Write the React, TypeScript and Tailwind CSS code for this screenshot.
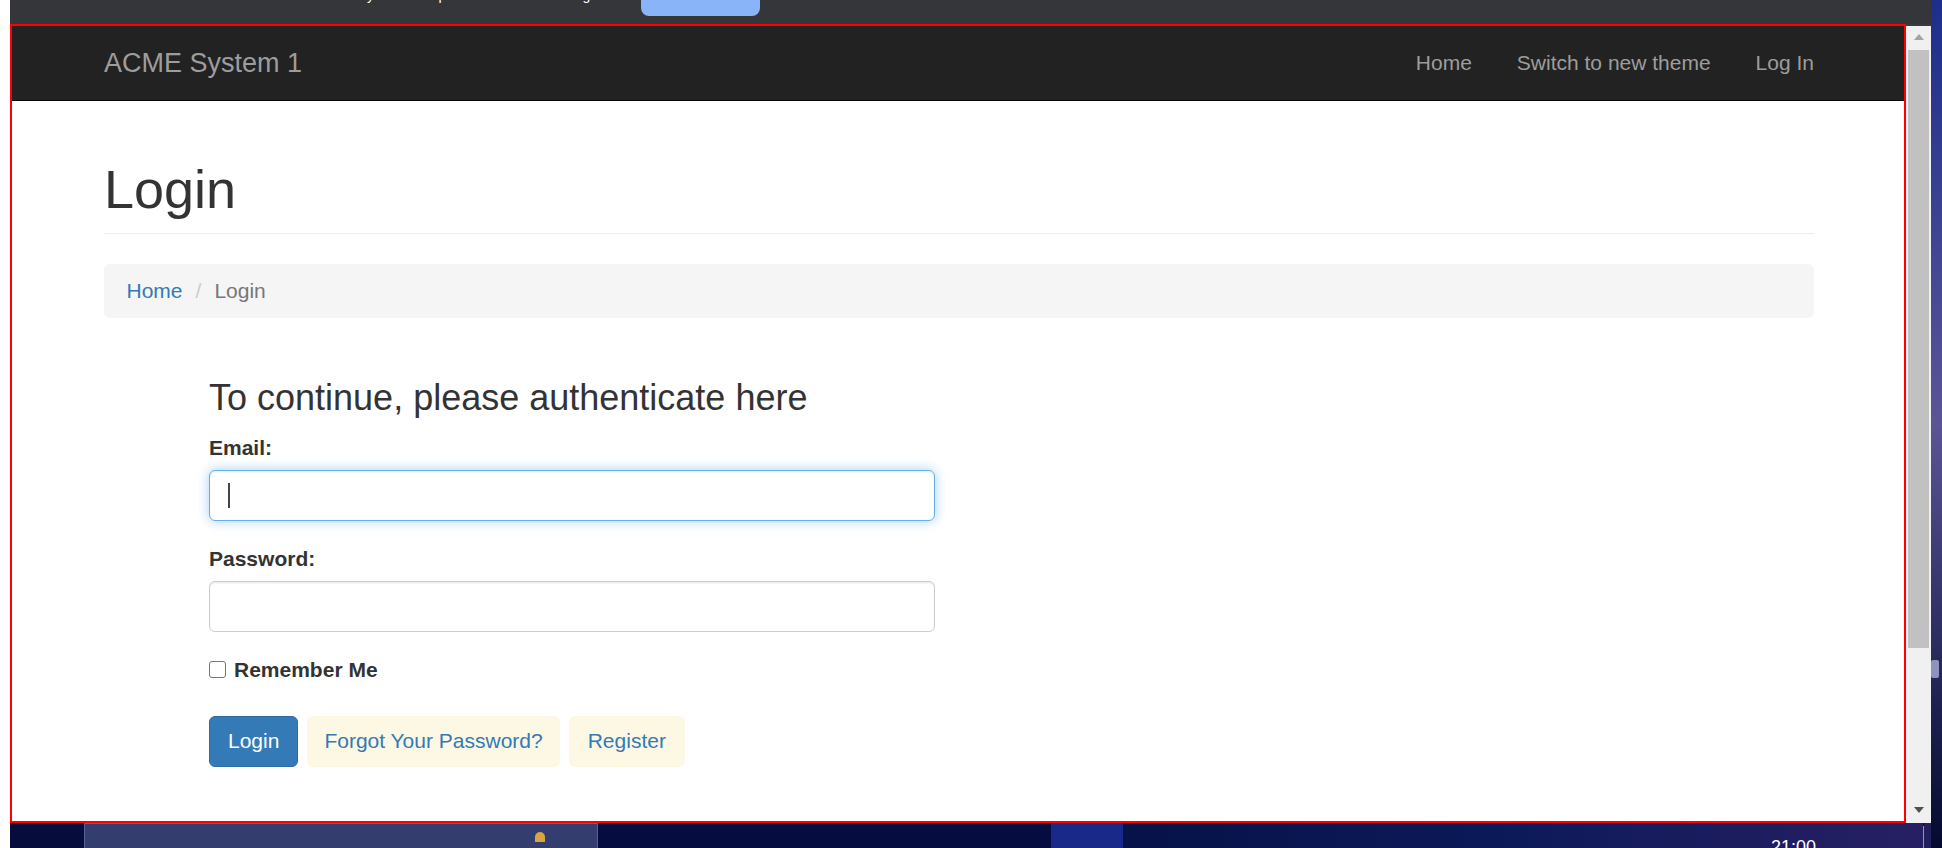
const font = "font-['Liberation_Sans',Arial,Helvetica,sans-serif]";

function TopBar() {
  return (
    <div className="flex h-[24px] shrink-0 items-start overflow-hidden bg-[#35363a]">
      <div className="flex w-[631px] shrink-0 overflow-hidden text-[14px] leading-[16px] text-white">
        <div className="flex w-[357px] shrink-0 justify-end">
          <span className="-mt-[13px] whitespace-nowrap">Screen is shared and&nbsp;</span>
        </div>
        <span className="-mt-[13px] whitespace-nowrap">you can stop the current tab sharing.</span>
      </div>
      <div className="h-[16px] w-[119px] shrink-0 rounded-b-[8px] bg-[#8ab4f8]" />
    </div>
  );
}

function Navbar() {
  return (
    <div className="h-[75px] shrink-0 border-b border-[#080808] bg-[#222222]">
      <div className="ml-[69px] flex h-full w-[1756px] items-center justify-between px-[23px]">
        <span className="text-[27px] leading-[30px] text-[#9d9d9d]">ACME System 1</span>
        <nav className="flex items-center gap-[45px] text-[21px] leading-[30px] text-[#9d9d9d]">
          <span>Home</span>
          <span>Switch to new theme</span>
          <span>Log In</span>
        </nav>
      </div>
    </div>
  );
}

function LoginForm() {
  return (
    <div className="ml-[105px] mt-[60px] w-[726px] text-[#333333]">
      <h3 className="mb-[15px] text-[36px] leading-[39.6px]">To continue, please authenticate here</h3>

      <div className="mb-[22.5px]">
        <label className="mb-[7.5px] block text-[21px] font-bold leading-[30px]">Email:</label>
        <div className="flex h-[51px] items-start rounded-[6px] border border-[#66afe9] bg-white pl-[18px] shadow-[inset_0_1.5px_1.5px_rgba(0,0,0,0.075),0_0_12px_rgba(102,175,233,0.6)]">
          <div className="mt-[12px] h-[25px] w-[2px] bg-[#444444]" />
        </div>
      </div>

      <div className="mb-[22.5px]">
        <label className="mb-[7.5px] block text-[21px] font-bold leading-[30px]">Password:</label>
        <div className="h-[51px] rounded-[6px] border border-[#cccccc] bg-white shadow-[inset_0_1.5px_1.5px_rgba(0,0,0,0.075)]" />
      </div>

      <div className="mt-[4px] flex h-[30px] items-center">
        <div className="h-[17px] w-[17px] rounded-[3px] border border-[#767676] bg-white" />
        <span className="ml-[8px] text-[21px] font-bold leading-[30px]">Remember Me</span>
      </div>

      <div className="mt-[31px] flex gap-[9px] text-[21px] leading-[30px]">
        <button className="h-[51px] rounded-[6px] border border-[#2e6da4] bg-[#337ab7] px-[18px] text-white">
          Login
        </button>
        <button className="h-[51px] rounded-[6px] border border-transparent bg-[#fcf8e3] px-[16px] text-[#337ab7]">
          Forgot Your Password?
        </button>
        <button className="h-[51px] rounded-[6px] border border-transparent bg-[#fcf8e3] px-[18px] text-[#337ab7]">
          Register
        </button>
      </div>
    </div>
  );
}

function BrowserFrame() {
  return (
    <div className="flex w-[1896px] shrink-0 flex-col overflow-hidden border-2 border-[#ff0000] bg-white">
      <Navbar />
      <div className="ml-[69px] w-[1756px] px-[23px]">
        <div className="mt-[59px] border-b border-[#eeeeee] pb-[13.5px]">
          <h1 className="text-[54px] leading-[59.4px] text-[#333333]">Login</h1>
        </div>
        <div className="mt-[30px] flex h-[54px] items-center rounded-[6px] bg-[#f5f5f5] px-[22.5px] text-[21px] leading-[30px]">
          <span className="text-[#337ab7]">Home</span>
          <span className="ml-[13px] mr-[13px] text-[#cccccc]">/</span>
          <span className="text-[#777777]">Login</span>
        </div>
        <LoginForm />
      </div>
    </div>
  );
}

function Scrollbar() {
  return (
    <div className="flex w-[25px] shrink-0 flex-col border-t-2 border-[#3a3b3f] bg-[#f0f0f0]">
      <div className="flex h-[22px] items-center justify-center">
        <svg width="10" height="6" viewBox="0 0 10 6">
          <path d="M5 0 L10 6 L0 6 Z" fill="#a3a3a3" />
        </svg>
      </div>
      <div className="mx-[2px] mt-[2px] h-[598px] bg-[#c1c1c1]" />
      <div className="flex-1" />
      <div className="mb-[2px] flex h-[22px] items-center justify-center">
        <svg width="10" height="6" viewBox="0 0 10 6">
          <path d="M0 0 L10 0 L5 6 Z" fill="#505050" />
        </svg>
      </div>
    </div>
  );
}

function Taskbar() {
  return (
    <div className="flex h-[25px] shrink-0 overflow-hidden bg-[#050b3a]">
      <div className="w-[74px] shrink-0 bg-[#060c3c]" />
      <div className="flex w-[514px] shrink-0 justify-end border-x border-t border-[#56609a] bg-[#343e6e] pr-[52px]">
        <div className="mt-[8px] h-[10px] w-[10px] rounded-t-full bg-[#d9a441]" />
      </div>
      <div className="w-[453px] shrink-0 bg-[#040c40]" />
      <div className="w-[72px] shrink-0 bg-[#18298a]" />
      <div className="flex w-[800px] shrink-0 bg-linear-to-r from-[#061248] via-[#0d1a5a] to-[#261f63] pl-[648px]">
        <span className="mt-[14px] text-[18px] leading-[20px] text-white">21:00</span>
      </div>
      <div className="mt-[3px] h-[22px] w-[1px] shrink-0 bg-[#8f93c4]" />
      <div className="w-[7px] shrink-0 bg-[#231f5c]" />
    </div>
  );
}

export default function App() {
  return (
    <div className={`flex h-[848px] w-[1942px] overflow-hidden bg-white ${font}`}>
      <div className="w-[10px] shrink-0 bg-white" />
      <div className="flex w-[1921px] shrink-0 flex-col">
        <TopBar />
        <div className="flex h-[799px] shrink-0">
          <BrowserFrame />
          <Scrollbar />
        </div>
        <Taskbar />
      </div>
      <div className="flex w-[11px] shrink-0 flex-col bg-linear-to-b from-[#1c2d8c] via-[#5b5497] to-[#050a30]">
        <div className="mt-[660px] h-[18px] w-[8px] rounded-[2px] bg-[#b8c2e8] opacity-70" />
      </div>
    </div>
  );
}
